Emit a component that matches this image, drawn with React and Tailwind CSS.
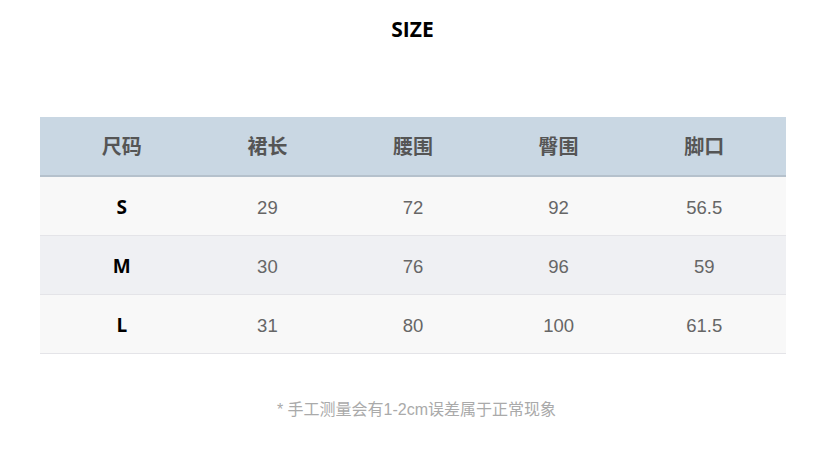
const rows = [
  { size: "S", vals: ["29", "72", "92", "56.5"], bg: "bg-[#f8f8f8]" },
  { size: "M", vals: ["30", "76", "96", "59"], bg: "bg-[#eff0f3]" },
  { size: "L", vals: ["31", "80", "100", "61.5"], bg: "bg-[#f8f8f8]" },
];

const heads = ["尺码", "裙长", "腰围", "臀围", "脚口"];

const App = () => {
  return (
    <div
      className="w-[839px] h-[463px] bg-white flex flex-col items-center"
      style={{ fontFamily: '"Open Sans", "Noto Sans CJK SC", sans-serif' }}
    >
      {/* title */}
      <h1 className="mt-[14px] h-[30px] leading-[30px] text-[21px] font-bold text-black ml-[-14px]">
        SIZE
      </h1>

      {/* table */}
      <div className="mt-[73px] w-[746px] ml-[-13px]">
        <div className="h-[60px] bg-[#c9d7e3] border-b-2 border-[#b5c1cc] grid grid-cols-5 px-[9px] items-center">
          {heads.map((h) => (
            <div
              key={h}
              className="text-center text-[20px] font-bold text-[#555]"
              style={{ fontFamily: '"Noto Sans CJK SC", sans-serif' }}
            >
              {h}
            </div>
          ))}
        </div>
        {rows.map((r) => (
          <div
            key={r.size}
            className={`h-[59px] ${r.bg} border-b border-[#e4e4e8] grid grid-cols-5 px-[9px] items-center pt-[3px]`}
          >
            <div className="text-center text-[19px] font-bold text-black">{r.size}</div>
            {r.vals.map((v, i) => (
              <div
                key={i}
                className="text-center text-[18.5px] text-[#666]"
                style={{ fontFamily: '"Liberation Sans", sans-serif' }}
              >
                {v}
              </div>
            ))}
          </div>
        ))}
      </div>

      {/* note */}
      <p
        className="mt-[44px] text-[16px] text-[#aaa] ml-[-6px]"
        style={{ fontFamily: '"Liberation Sans", "Noto Sans CJK SC", sans-serif' }}
      >
        * 手工测量会有1-2cm误差属于正常现象
      </p>
    </div>
  );
};

export default App;
